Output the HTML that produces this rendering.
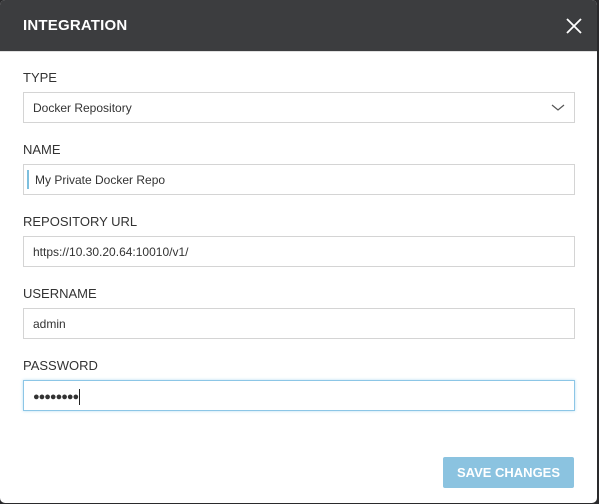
<!DOCTYPE html>
<html><head><style>
body{margin:0;width:599px;height:504px;background:#2a2a2c;overflow:hidden;font-family:"Liberation Sans",sans-serif}
.d{position:absolute;left:0;top:0;width:597px;height:503px;background:#fff;border-radius:5px;overflow:hidden}
.h{height:51px;background:#3c3d3f;position:relative;border-bottom:1px solid #e0e0e0}
.h span{position:absolute;left:23px;top:17px;color:#fff;font-size:15px;font-weight:bold;letter-spacing:0.2px}
.x{position:absolute;left:566px;top:18px}
.l{position:absolute;left:23px;font-size:13px;color:#333}
.i{position:absolute;left:23px;width:550px;height:29px;border:1px solid #d4d4d4;font-size:12px;color:#333;line-height:31px;box-sizing:content-box}
.i span{margin-left:9px}
.b{position:absolute;left:443px;top:457px;width:131px;height:31px;background:#8bc3e0;border-radius:2px;color:#fff;font-size:13px;font-weight:bold;text-align:center;line-height:31px}
</style></head><body>
<div class="d">
<div class="h"><span>INTEGRATION</span>
<svg class="x" width="16" height="16" viewBox="0 0 16 16"><path d="M1 1L15 15M15 1L1 15" stroke="#fff" stroke-width="1.8"/></svg></div>
<div class="l" style="top:70px">TYPE</div>
<div class="i" style="top:92px"><span>Docker Repository</span>
<svg style="position:absolute;left:527px;top:11px" width="14" height="8" viewBox="0 0 14 8"><path d="M1 1L7 6L13 1" stroke="#555" stroke-width="1.2" fill="none"/></svg></div>
<div class="l" style="top:142px">NAME</div>
<div class="i" style="top:164px"><div style="position:absolute;left:3px;top:5px;width:2px;height:19px;background:#7dbfde"></div><span style="margin-left:11px">My Private Docker Repo</span></div>
<div class="l" style="top:214px">REPOSITORY URL</div>
<div class="i" style="top:236px"><span>https://10.30.20.64:10010/v1/</span></div>
<div class="l" style="top:286px">USERNAME</div>
<div class="i" style="top:308px"><span>admin</span></div>
<div class="l" style="top:358px">PASSWORD</div>
<div class="i" style="top:380px;border-color:#8cc6e6;box-shadow:0 0 3px #b8def2"><span style="letter-spacing:-1px;font-size:11px">●●●●●●●●</span><span style="display:inline-block;width:1px;height:16px;background:#222;vertical-align:middle;margin-left:1px"></span></div>
<div class="b">SAVE CHANGES</div>
</div>
</body></html>
